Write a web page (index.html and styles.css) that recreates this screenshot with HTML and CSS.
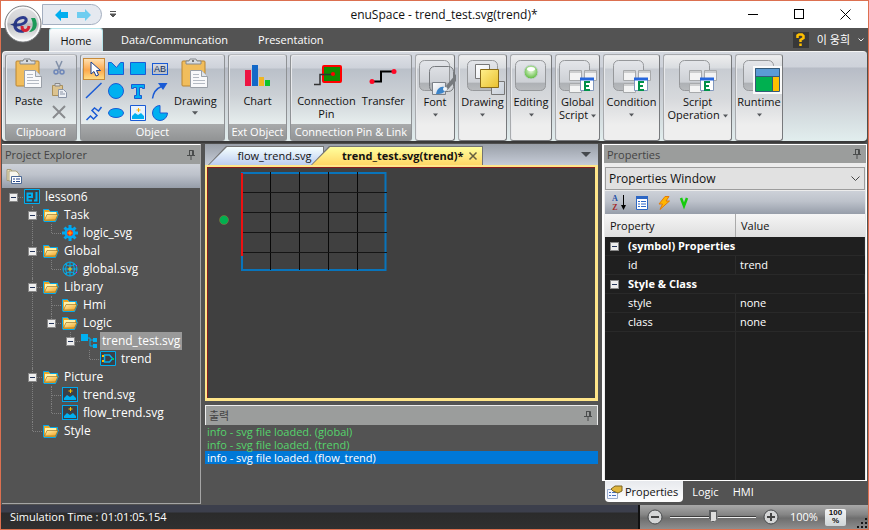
FILE: index.html
```html
<!DOCTYPE html>
<html lang="ko">
<head>
<meta charset="utf-8">
<title>enuSpace - trend_test.svg(trend)*</title>
<link rel="stylesheet" href="styles.css">
</head>
<body>
<svg class="defs" aria-hidden="true">
  <defs>
    <linearGradient id="gold" x1="0" y1="0" x2="1" y2="1"><stop offset="0" stop-color="#fff3b0"/><stop offset="1" stop-color="#f0a020"/></linearGradient>
    <linearGradient id="page" x1="0" y1="0" x2="1" y2="1"><stop offset="0" stop-color="#ffffff"/><stop offset="1" stop-color="#c9d0da"/></linearGradient>
    <linearGradient id="yellow" x1="0" y1="0" x2="1" y2="1"><stop offset="0" stop-color="#fff08c"/><stop offset="1" stop-color="#e9c02e"/></linearGradient>
    <linearGradient id="frame" x1="0" y1="0" x2="0" y2="1"><stop offset="0" stop-color="#e4e6ea"/><stop offset=".73" stop-color="#cdd0d5"/><stop offset=".74" stop-color="#adb0b4"/><stop offset="1" stop-color="#b9bbbe"/></linearGradient>
    <linearGradient id="orb" x1="0" y1="0" x2="0" y2="1"><stop offset="0" stop-color="#e2e2e4"/><stop offset=".45" stop-color="#cfd0d2"/><stop offset=".5" stop-color="#b9babd"/><stop offset="1" stop-color="#fafafa"/></linearGradient>
    <radialGradient id="lamp" cx=".5" cy=".4" r=".6"><stop offset="0" stop-color="#eefce4"/><stop offset="1" stop-color="#58b838"/></radialGradient>
  </defs>
  <symbol id="clipboard" viewBox="0 0 28 32">
    <rect x="1" y="3" width="23" height="25" rx="1" fill="#f1bd5c" stroke="#b98531"/>
    <path d="M5 6V3h3l1-2h6l1 2h4v3z" fill="#d9dde1" stroke="#85898e"/><circle cx="12" cy="3" r="1" fill="#555"/>
    <path d="M9.500 12.500h11l6 6v11h-17z" fill="#f8f9fb" stroke="#9aa0a8"/>
    <path d="M20.500 12.500v6h6" fill="#dfe4ea" stroke="#9aa0a8"/>
    <path d="M12 16.500h6M12 19.500h6M12 22.500h12M12 25.500h12" stroke="#b4bac3"/>
  </symbol>
  <symbol id="folder" viewBox="0 0 16 16">
    <path d="M.5 13V2.500h5l2 2h7v3l1-.5-3 7.500H1z" fill="#e9a92d" stroke="#00a8f0"/>
    <path d="M2 5h11v3H4l-2 4z" fill="#fff2a8"/><path d="M4 7.500h11l-2.500 5.500h-11z" fill="url(#gold)" stroke="#8d6519" stroke-width=".6"/>
  </symbol>
  <symbol id="picture" viewBox="0 0 16 16">
    <rect x=".5" y=".5" width="15" height="14" fill="#3a4048" stroke="#00a8f0"/>
    <path d="M2 13v-2l3-3 3 2 3-2 3 3v2z" fill="#00b0f0"/><path d="M8.500 2v4M6.500 4h4" stroke="#ffc000"/>
  </symbol>
  <symbol id="pin" viewBox="0 0 8 10"><path d="M2 .5h4.500M2.500 .5v5M5.500 .5v5M6.500 .5v5M0 5.500h8M4 6v4" fill="none" stroke="#4a4c4c"/></symbol>
  <symbol id="down" viewBox="0 0 7 4"><path d="M0 0h7L3.500 4z" fill="#55585c"/></symbol>
  <symbol id="script" viewBox="0 0 40 34">
    <rect x="1.500" y=".5" width="30" height="30" rx="5" fill="url(#frame)" stroke="#96989b"/>
    <g fill="#f3f3f3" stroke="#a7a9ab"><path d="M11.500 10.500h12v10h-12zM26.500 10.500h12v10h-12zM11.500 23.500h12v9h-12z"/></g>
    <path d="M11.500 12h12M26.500 12h12M11.500 25h12" stroke="#a7a9ab"/>
    <path d="M22.500 18.500h13v12h-13z" fill="#fff" stroke="#8197bc"/><path d="M22 19h14" stroke="#2867dc" stroke-width="3"/>
    <path d="M32 22h-5v8h5M27 26h4" fill="none" stroke="#00924a" stroke-width="2"/>
  </symbol>
</svg>

<div class="window">
  <header class="titlebar">
    <div class="quick">
      <button class="plain" aria-label="Undo"><svg width="14" height="12"><path d="M0 6l6-6v3h7v6H6v3z" fill="#00aeef"/></svg></button>
      <button class="plain" aria-label="Redo"><svg width="14" height="12"><path d="M14 6L8 0v3H0v6h8v3z" fill="#6dcdf0"/></svg></button>
    </div>
    <button class="plain more" aria-label="Customize"><svg width="6" height="7"><path d="M0 .5h6M0 3h6L3 6z" stroke="#555" fill="#555"/></svg></button>
    <h1>enuSpace - trend_test.svg(trend)*</h1>
    <div class="winbuttons">
      <button class="plain" aria-label="Minimize"><svg width="11" height="11"><path d="M0 5.500h10" stroke="#000"/></svg></button>
      <button class="plain" aria-label="Maximize"><svg width="11" height="11"><rect x=".5" y=".5" width="9" height="9" fill="none" stroke="#000"/></svg></button>
      <button class="plain" aria-label="Close"><svg width="11" height="11"><path d="M.5 .5l10 10M10.500 .5l-10 10" stroke="#000"/></svg></button>
    </div>
  </header>
  <button class="plain orb" aria-label="Application menu">
    <svg width="38" height="38" viewBox="0 0 38 38"><circle cx="19" cy="19" r="18" fill="url(#orb)" stroke="#77797c"/><circle cx="19" cy="19" r="16.500" fill="none" stroke="#fafafa" stroke-width="1.500"/>
      <path d="M13 20c6 0 10-3 9-6-2-3-10-1-11 5-1 6 4 8 9 7" fill="none" stroke="#2b3a8c" stroke-width="3"/>
      <path d="M6 19.500l7-2v4.500z" fill="#25367c"/><path d="M18 21c0 6 6 6 7 0" fill="none" stroke="#d22335" stroke-width="3"/><path d="M27 13h4c4 7 1 14-6 14 4-4 5-8 2-14z" fill="#1c9a58"/></svg>
  </button>

  <nav class="tabs">
    <button class="tab active">Home</button><button class="tab">Data/Communcation</button><button class="tab">Presentation</button>
    <div class="user"><button class="help" aria-label="Help"><svg width="9" height="13"><path d="M1.500 5V2.500L3 1.500h3l1.500 1.500v2L4.500 7v2M4.500 10.500V13" fill="none" stroke="#ffc000" stroke-width="2.500"/></svg></button>
      <button class="plain">이 웅희</button><svg width="6" height="4"><path d="M.5 .5L3 3 5.500 .5" fill="none" stroke="#eee"/></svg></div>
  </nav>

  <section class="ribbon" aria-label="Home">
    <div class="group"><div class="tools">
      <button class="tool"><svg width="28" height="32"><use href="#clipboard"/></svg><span>Paste</span></button>
      <div class="stack">
        <button class="plain" aria-label="Cut"><svg width="16" height="16"><path d="M5 1l4 9M11 1L7 10" stroke="#8290a8" stroke-width="1.500"/><circle cx="5" cy="12" r="2" fill="none" stroke="#6d86b8" stroke-width="1.500"/><circle cx="11" cy="12" r="2" fill="none" stroke="#6d86b8" stroke-width="1.500"/></svg></button>
        <button class="plain" aria-label="Copy"><svg width="16" height="16"><path d="M1.500 3.500h10v10h-10z" fill="#dcc38f" stroke="#a9905d"/><path d="M4 4V1.500h5V4z" fill="#ddd" stroke="#888"/><path d="M7.500 7.500h5l3 3v5h-8z" fill="#edf0f5" stroke="#8993a5"/><path d="M9 10h3M9 12h5" stroke="#8993a5"/></svg></button>
        <button class="plain" aria-label="Delete"><svg width="16" height="16"><path d="M2 2l12 12M14 2L2 14" stroke="#898b8e" stroke-width="2"/></svg></button>
      </div></div><div class="caption">Clipboard</div></div>

    <div class="group"><div class="tools objects">
      <div class="shapes">
        <button class="shape selected" aria-label="Select"><svg width="16" height="16"><path d="M5 1v12l3-2.500 2 4.500 2.500-1-2-4.500h4z" fill="#fff" stroke="#173f94"/></svg></button>
        <button class="shape" aria-label="Polygon"><svg width="16" height="16"><path d="M.5 1.500h3l5 5 4-5h3v12H.5z" fill="#00b0f0" stroke="#1a5bd5"/></svg></button>
        <button class="shape" aria-label="Rectangle"><svg width="16" height="16"><path d="M.5 1.500h15v12H.5z" fill="#00b0f0" stroke="#1a5bd5"/></svg></button>
        <button class="shape label-shape" aria-label="Text box"><span>AB</span></button>
        <button class="shape" aria-label="Line"><svg width="16" height="16"><path d="M0 15L15.500 0" stroke="#1a5bd5" stroke-width="1.500"/></svg></button>
        <button class="shape" aria-label="Circle"><svg width="16" height="16"><circle cx="8" cy="8" r="7.500" fill="#00b0f0" stroke="#1a5bd5"/></svg></button>
        <button class="shape" aria-label="Text"><svg width="16" height="16"><path d="M1.500 1.500h13v4h-2v-1h-3v8h2v3h-7v-3h2v-8h-3v1h-2z" fill="#00b0f0" stroke="#1a5bd5"/></svg></button>
        <button class="shape" aria-label="Arrow"><svg width="16" height="16"><path d="M.5 15.500c1-7 4-10 9-12" fill="none" stroke="#1a5bd5" stroke-width="1.500"/><path d="M6 0h9.500L11 7z" fill="#1a5bd5"/></svg></button>
        <button class="shape" aria-label="Polyline"><svg width="16" height="16"><path d="M.5 15l4-4 3 3 3.500-3.500-5-5L8.500 3l4 3 3-4" fill="none" stroke="#1a5bd5" stroke-width="1.500"/></svg></button>
        <button class="shape" aria-label="Ellipse"><svg width="16" height="16"><ellipse cx="8" cy="8" rx="7.500" ry="4.500" fill="#00b0f0" stroke="#1a5bd5"/></svg></button>
        <button class="shape" aria-label="Image"><svg width="16" height="16"><path d="M.5 .5h15v15H.5z" fill="#e9f3fb" stroke="#1a5bd5"/><path d="M2 14v-3l3-3 3 2 3-2 3 3v3z" fill="#00b0f0"/><path d="M8.500 3v4M6.500 5h4" stroke="#ffb000"/></svg></button>
        <button class="shape" aria-label="Pie"><svg width="16" height="16"><path d="M8 .5v7.500h7.500A7.500 7.500 0 1 1 8 .5z" fill="#00b0f0" stroke="#1a5bd5"/></svg></button>
      </div>
      <button class="tool"><svg width="28" height="32"><use href="#clipboard"/></svg><span>Drawing</span><svg width="6" height="4"><use href="#down"/></svg></button>
      </div><div class="caption">Object</div></div>

    <div class="group"><div class="tools"><button class="tool"><svg width="28" height="32"><path d="M1 12h6v16H1z" fill="#ed1442"/><path d="M8 7h6v21H8z" fill="#1368c8"/><path d="M15 19h5v9h-5z" fill="#efb623"/><path d="M21 22h5v6h-5z" fill="#0fc32c"/></svg><span>Chart</span></button></div><div class="caption">Ext Object</div></div>

    <div class="group"><div class="tools links">
      <button class="tool"><svg width="32" height="32"><rect x="13" y="8" width="18" height="16" rx="1" fill="#108b00" stroke="#ff0000" stroke-width="2"/><path d="M4 26.500h6v-10h12" fill="none" stroke="#333" stroke-width="1.500"/><circle cx="23" cy="16" r="2" fill="#f00"/></svg><span>Connection<br>Pin</span></button>
      <button class="tool"><svg width="28" height="32"><path d="M2 23.500h10v-10h12" fill="none" stroke="#000" stroke-width="2"/><circle cx="3" cy="23.500" r="2.500" fill="#ff0825"/><circle cx="25" cy="13.500" r="2.500" fill="#ff0825"/></svg><span>Transfer</span></button>
      </div><div class="caption">Connection Pin &amp; Link</div></div>

    <button class="group small"><svg width="40" height="34"><rect x="4.500" y=".5" width="30" height="30" rx="5" fill="url(#frame)" stroke="#96989b"/><rect x="14.500" y="6.500" width="24" height="25" rx="5" fill="none" stroke="#777a7e"/><path d="M17.500 22.500h13v12h-13z" fill="url(#page)" stroke="#7c8188"/><path d="M21 34c1-5 4-8 8-7l2 3c-3 4-6 4-10 4z" fill="#3b83c8"/><circle cx="30" cy="29" r="2" fill="#f3f8fc"/><path d="M31 26L41 14v7l-8 8z" fill="#777a7e"/></svg><span>Font</span><svg width="5" height="4"><use href="#down"/></svg></button>
    <button class="group small"><svg width="40" height="34"><rect x="4.500" y=".5" width="30" height="30" rx="5" fill="url(#frame)" stroke="#96989b"/><path d="M12.500 4.500h14v14h-14zM28.500 21.500h13v13h-13z" fill="url(#page)" stroke="#777"/><path d="M17.500 9.500h18v18h-18z" fill="url(#yellow)" stroke="#8a6b16"/></svg><span>Drawing</span><svg width="5" height="4"><use href="#down"/></svg></button>
    <button class="group small"><svg width="40" height="34"><rect x="4.500" y=".5" width="30" height="30" rx="5" fill="url(#frame)" stroke="#96989b"/><circle cx="20" cy="12" r="7" fill="url(#lamp)" stroke="#c9d0d6"/><ellipse cx="20" cy="9" rx="4" ry="2" fill="#fff"/></svg><span>Editing</span><svg width="5" height="4"><use href="#down"/></svg></button>
    <button class="group small"><svg width="40" height="34"><use href="#script"/></svg><span>Global<br>Script <svg width="5" height="4"><use href="#down"/></svg></span></button>
    <button class="group small"><svg width="40" height="34"><use href="#script"/></svg><span>Condition</span><svg width="5" height="4"><use href="#down"/></svg></button>
    <button class="group small"><svg width="40" height="34"><use href="#script"/></svg><span>Script<br>Operation <svg width="5" height="4"><use href="#down"/></svg></span></button>
    <button class="group small"><svg width="40" height="34"><rect x="4.500" y=".5" width="30" height="30" rx="5" fill="url(#frame)" stroke="#96989b"/><path d="M14 6h29v28H14z" fill="#fafafa"/><path d="M16 8h25v8H16z" fill="#5b9bd5"/><path d="M16 17h17v14H16z" fill="#00b050"/><path d="M34 17h7v14h-7z" fill="#ffc000"/><path d="M16.500 8.500h24v23h-24zM16.500 16.500h24M33.500 16.500v15" fill="none" stroke="#365a78"/></svg><span>Runtime</span><svg width="5" height="4"><use href="#down"/></svg></button>
  </section>

  <main class="workspace">
    <aside class="panel explorer">
      <h2 class="panel-title">Project Explorer<svg width="8" height="10"><use href="#pin"/></svg></h2>
      <div class="toolbar"><button class="plain" aria-label="View list"><svg width="16" height="16"><path d="M1 1.500h4l1 2h5v9H1z" fill="#e9dfb7" stroke="#a59b78"/><path d="M3 3h7l3 3v7H3z" fill="#f8f6ee" stroke="#aaa27e"/><path d="M5.500 8.500h10v7h-10z" fill="#fff" stroke="#4d6a97"/><path d="M7 11h2M10 11h4M7 13.500h2M10 13.500h4" stroke="#27478a"/></svg></button></div>
      <ul class="tree">
        <li><div class="row"><button class="toggle" aria-label="Collapse"></button><svg width="16" height="16"><path d="M.5 .5h15v14H.5z" fill="#3c4046" stroke="#00aeef"/><path d="M8 11.500H3.500v-7H8V8H4M12.500 3v8.500H10" fill="none" stroke="#00b0f0" stroke-width="2"/></svg><span>lesson6</span></div>
          <ul>
            <li><div class="row"><button class="toggle" aria-label="Collapse"></button><svg width="16" height="16"><use href="#folder"/></svg><span>Task</span></div>
              <ul><li><div class="row"><svg width="16" height="16"><circle cx="8" cy="8" r="5.500" fill="#00a8f0"/><path d="M8 0v16M0 8h16M2.500 2.500l11 11M13.500 2.500l-11 11" stroke="#00a8f0" stroke-width="3"/><circle cx="8" cy="8" r="3" fill="#f32b1b"/><path d="M8 5.500v5M5.500 8h5" stroke="#ffc000"/></svg><span>logic_svg</span></div></li></ul></li>
            <li><div class="row"><button class="toggle" aria-label="Collapse"></button><svg width="16" height="16"><use href="#folder"/></svg><span>Global</span></div>
              <ul><li><div class="row"><svg width="16" height="16"><circle cx="8" cy="8" r="7" fill="none" stroke="#00b0f0"/><path d="M8 1v14M1 8h14M3 3q5 4 10 0M3 13q5-4 10 0M5 2q-3 6 0 12M11 2q3 6 0 12" fill="none" stroke="#00b0f0"/><path d="M8 6v4M6 8h4" stroke="#ffc000"/><path d="M14 4h1v1h-1zM14 11h1v1h-1z" fill="#e0f"/></svg><span>global.svg</span></div></li></ul></li>
            <li><div class="row"><button class="toggle" aria-label="Collapse"></button><svg width="16" height="16"><use href="#folder"/></svg><span>Library</span></div>
              <ul><li><div class="row"><svg width="16" height="16"><use href="#folder"/></svg><span>Hmi</span></div></li>
                <li><div class="row"><button class="toggle" aria-label="Collapse"></button><svg width="16" height="16"><use href="#folder"/></svg><span>Logic</span></div>
                  <ul><li><div class="row"><button class="toggle" aria-label="Collapse"></button><svg width="16" height="16"><path d="M0 1h7v7H0zM12 5h4v4h-4zM12 11h4v4h-4z" fill="#00b0f0"/><path d="M7 5h2v8h3M9 7h3" fill="none" stroke="#00b0f0"/></svg><span class="current">trend_test.svg</span></div>
                    <ul><li><div class="row"><svg width="16" height="16"><path d="M.5 .5h15v14H.5z" fill="#3b4148" stroke="#00aeef"/><path d="M4.500 4h5l3 3.500-3 3.500h-5z" fill="none" stroke="#00b0f0" stroke-width="1.500"/><path d="M2 4h2v2H2zM2 9h2v2H2z" fill="#ffc000"/><path d="M12 7h2v2h-2z" fill="#00d060"/></svg><span>trend</span></div></li></ul></li></ul></li></ul></li>
            <li><div class="row"><button class="toggle" aria-label="Collapse"></button><svg width="16" height="16"><use href="#folder"/></svg><span>Picture</span></div>
              <ul><li><div class="row"><svg width="16" height="16"><use href="#picture"/></svg><span>trend.svg</span></div></li>
                <li><div class="row"><svg width="16" height="16"><use href="#picture"/></svg><span>flow_trend.svg</span></div></li></ul></li>
            <li><div class="row"><svg width="16" height="16"><use href="#folder"/></svg><span>Style</span></div></li>
          </ul></li>
      </ul>
    </aside>

    <div class="center">
      <section class="document">
        <div class="doctabs"><button class="doctab">flow_trend.svg</button><button class="doctab open"><span>trend_test.svg(trend)*</span><svg width="8" height="8"><path d="M.5 .5l7 7M7.500 .5l-7 7" stroke="#666040" stroke-width="1.500"/></svg></button>
          <button class="plain doclist" aria-label="Documents"><svg width="10" height="5"><path d="M0 0h10L5 5z" fill="#45494e"/></svg></button></div>
        <div class="canvas">
          <svg width="182" height="108" viewBox="1 2 182 108">
            <path d="M35 8h144.500v97H36V90" fill="none" stroke="#0874bb" stroke-width="2"/>
            <path d="M64.500 7v98M93.500 7v98M122.500 7v98M151.500 7v98" stroke="#080808"/>
            <path d="M36 27.500h145M36 47.500h145M36 67.500h145M36 87.500h145" stroke="#151515"/>
            <path d="M36 8v83" stroke="#ee1010" stroke-width="2"/><circle cx="18" cy="55" r="4.500" fill="#00b050" stroke="#a66a3b" stroke-width=".5"/>
          </svg>
        </div>
      </section>
      <section class="output">
        <h2 class="panel-title">출력<svg width="8" height="10"><use href="#pin"/></svg></h2>
        <ul class="log"><li>info - svg file loaded. (global)</li><li>info - svg file loaded. (trend)</li><li class="current">info - svg file loaded. (flow_trend)</li></ul>
      </section>
    </div>

    <aside class="side">
      <section class="properties">
        <h2 class="panel-title">Properties<svg width="8" height="10"><use href="#pin"/></svg></h2>
        <div class="inner">
          <div class="combo"><select aria-label="Properties target"><option>Properties Window</option></select><svg width="9" height="5"><path d="M.5 .5l4 4 4-4" fill="none" stroke="#444"/></svg></div>
          <div class="toolbar">
            <button class="plain sort" aria-label="Sort alphabetically"><span class="az"><b>A</b><i>Z</i></span><svg width="5" height="15"><path d="M2.500 0v12" stroke="#000"/><path d="M0 10h5l-2.500 5z"/></svg></button>
            <button class="plain" aria-label="Categories"><svg width="12" height="14"><path d="M.5 .5h11v13H.5z" fill="#fff" stroke="#2e67c4"/><path d="M0 1.500h12" stroke="#2e67c4" stroke-width="3"/><path d="M2 5.500h2M5 5.500h5M2 8h2M5 8h5M2 10.500h2M5 10.500h5" stroke="#3169c9"/></svg></button>
            <button class="plain" aria-label="Events"><svg width="12" height="14"><path d="M7 .5h4L8 5h3.500L2 13.500 4.500 8H1z" fill="#ffb600" stroke="#e27a0b"/></svg></button>
            <button class="plain" aria-label="Variables"><svg width="8" height="10"><path d="M1 0l3 8 3-8" fill="none" stroke="#15cb0d" stroke-width="2.500"/></svg></button>
          </div>
          <table>
            <thead><tr><th>Property</th><th>Value</th></tr></thead>
            <tbody>
              <tr class="category"><td colspan="2"><button class="toggle" aria-label="Collapse"></button>(symbol) Properties</td></tr>
              <tr><td>id</td><td>trend</td></tr>
              <tr class="category"><td colspan="2"><button class="toggle" aria-label="Collapse"></button>Style &amp; Class</td></tr>
              <tr><td>style</td><td>none</td></tr>
              <tr><td>class</td><td>none</td></tr>
              <tr class="rest"><td></td><td></td></tr>
            </tbody>
          </table>
        </div>
      </section>
      <div class="sidetabs">
        <button class="active"><svg width="16" height="14"><path d="M.5 4.500h10v9H.5z" fill="#f4f7ff" stroke="#9aaccd"/><path d="M2 7.500h2M5 7.500h4M2 10.500h2M5 10.500h4" stroke="#4771bd"/><path d="M4 4l4-3h7v5l-4 2-5-2z" fill="#dfb53c" stroke="#7c6522"/></svg>Properties</button>
        <button>Logic</button><button>HMI</button>
      </div>
    </aside>
  </main>

  <footer class="status">
    <span>Simulation Time : 01:01:05.154</span>
    <div class="zoom">
      <button class="plain" aria-label="Zoom out"><svg width="16" height="16"><circle cx="8" cy="8" r="7" fill="#d4d5d6" stroke="#47494b"/><path d="M4 8h8" stroke="#444" stroke-width="2"/></svg></button>
      <input type="range" aria-label="Zoom" min="0" max="200" value="100">
      <button class="plain" aria-label="Zoom in"><svg width="16" height="16"><circle cx="8" cy="8" r="7" fill="#d4d5d6" stroke="#47494b"/><path d="M4 8h8M8 4v8" stroke="#444" stroke-width="2"/></svg></button>
      <span>100%</span>
      <button class="reset">100<br>%</button>
      <svg class="grip" width="11" height="11"><path d="M8 0h2v2H8zM4 4h2v2H4zM8 4h2v2H8zM0 8h2v2H0zM4 8h2v2H4zM8 8h2v2H8z" fill="#161616"/></svg>
    </div>
  </footer>
</div>
</body>
</html>
```

FILE: styles.css
```css
* { box-sizing: border-box; }

body {
  margin: 0;
  color: #111;
  background: #535353;
  font: 11px/13px "Open Sans", "Noto Sans CJK KR", sans-serif;
}

button, select { font: inherit; color: inherit; margin: 0; }
button { white-space: nowrap; }
svg { flex: none; display: block; overflow: visible; }
ul { margin: 0; padding: 0; list-style: none; }
.defs { position: absolute; width: 0; height: 0; }
.plain { display: flex; align-items: center; justify-content: center; padding: 0; border: 0; background: none; }

.window {
  position: relative;
  display: flex;
  flex-direction: column;
  min-height: 100vh;
  border: 1px solid #dc7050;
}

/* title bar */
.titlebar { display: flex; align-items: center; height: 27px; background: #fff; }
.quick {
  display: flex;
  align-items: center;
  gap: 8px;
  width: 60px;
  height: 21px;
  margin-left: 41px;
  padding-left: 12px;
  border: 1px solid #a4afc0;
  border-radius: 0 11px 11px 0;
  background: #e5e9f0;
}
.more { width: 22px; }
.titlebar h1 { flex: 1; margin: 0; padding-left: 34px; text-align: center; font-size: 12px; font-weight: 400; }
.winbuttons { display: flex; }
.winbuttons button { width: 46px; height: 27px; }
.orb { position: absolute; left: 3px; top: 4px; z-index: 2; }

/* ribbon tabs */
.tabs { display: flex; align-items: flex-end; height: 23px; padding-left: 48px; background: #535353; color: #fff; }
.tab { height: 23px; padding: 0 15px; border: 0; background: none; }
.tab.active {
  width: 54px;
  margin-right: 3px;
  padding: 0;
  border-radius: 3px 3px 0 0;
  border: 1px solid #b7e4ea;
  border-bottom: 0;
  background: linear-gradient(#fbfcfd, #d6d9df);
  color: #111;
}
.user { display: flex; align-items: center; gap: 8px; height: 23px; margin-left: auto; padding-right: 4px; }
.help { display: flex; align-items: center; justify-content: center; width: 16px; height: 16px; padding: 0; border: 0; background: #383838; }

/* ribbon */
.ribbon {
  display: grid;
  grid-template-columns: 72px 145px 59px 122px 40px 49px 42px 45px 57px 69px 48px;
  gap: 3px;
  height: 90px;
  margin: 0 1px 3px;
  padding: 2px;
  border: solid #f5f5f5;
  border-width: 1px 0 0 1px;
  border-radius: 4px;
  box-shadow: 0 2px 1px #393939;
  background: linear-gradient(#d5d9e0 0, #ced2da 15px, #b7bcc6 16px, #c8ccd2 42px, #e2eeee 100%);
}
.group {
  display: flex;
  flex-direction: column;
  min-width: 0;
  border: 1px solid #8f9295;
  border-top-color: #b7b9bd;
  border-radius: 3px;
  box-shadow: inset 1px 1px #e8e9ec;
  background: linear-gradient(#dcdfe5 0, #ced2da 13px, #bac0c9 14px, #cbd0d5 40px, #e6eded 68px);
}
.tools { flex: 1; display: flex; justify-content: space-evenly; padding-top: 3px; }
.objects { justify-content: flex-start; gap: 3px; padding-left: 2px; }
.caption { height: 16px; line-height: 15px; background: linear-gradient(#a8aaab, #929495); color: #fff; text-align: center; white-space: nowrap; }
.tool { display: flex; flex-direction: column; align-items: center; gap: 4px; padding: 0; border: 0; background: none; }
.stack { display: grid; align-content: start; gap: 6px; padding-top: 2px; }
.shapes { display: grid; grid-template-columns: repeat(4, 22px); grid-auto-rows: 22px; align-content: start; }
.shape { display: flex; align-items: center; justify-content: center; padding: 0; border: 1px solid transparent; background: none; }
.shape.selected { border-color: #c88b3a; background: linear-gradient(#ffe0b0, #fca84d 55%, #ffdc83); }
.label-shape span { width: 16px; border: 1px solid #1a5bd5; color: #14305e; font: 9px/10px "Liberation Sans", sans-serif; }
.small {
  align-items: center;
  gap: 1px;
  padding: 5px 0 0;
  border-color: #a8aaad #77797c #77797c #a8aaad;
  background: linear-gradient(#efefef 0, #d9dce0 13px, #c8ccd2 14px, #d7d9dc 44px, #eeeeee 70px);
}
.small span svg { display: inline-block; vertical-align: middle; }
.small > svg + span + svg { margin-top: 4px; }

/* workspace */
.workspace { flex: 1; display: grid; grid-template-columns: 199px 1fr 265px; gap: 4px; padding: 0 1px 1px; }
.panel-title {
  display: flex;
  align-items: center;
  justify-content: space-between;
  height: 19px;
  margin: 0;
  padding: 0 5px 0 3px;
  background: #9b9d9c;
  color: #444;
  font-size: 11px;
  font-weight: 400;
}
.toolbar { display: flex; align-items: center; height: 24px; background: linear-gradient(#cdd1d8, #bdc2cb 45%, #969da9); }
.explorer { border: 1px solid #a5a5a5; border-top-color: #fff; border-left: 0; background: #535353; color: #fff; }
.explorer .toolbar { padding-left: 4px; }

/* tree */
.tree { font-size: 12px; }
.tree ul { margin-left: 19px; }
.tree li { position: relative; }
.tree ul > li::before { content: ""; position: absolute; left: 11px; top: 0; bottom: 0; border-left: 1px dotted #808080; }
.tree ul > li:last-child::before { bottom: auto; height: 9px; }
.row { position: relative; display: flex; align-items: center; height: 18px; padding-left: 22px; }
.row::before { content: ""; position: absolute; left: 12px; top: 9px; width: 9px; border-top: 1px dotted #808080; }
.row > span { margin-left: 3px; padding: 0 2px; line-height: 18px; }
.row .current { background: #999; }
.toggle { width: 9px; height: 9px; padding: 0; border: 1px solid #888; background: linear-gradient(#26365a, #26365a) center / 5px 1px no-repeat, #eee; }
.row .toggle { position: relative; margin: 0 6px 0 -15px; }

/* documents and output */
.center { display: flex; flex-direction: column; gap: 4px; min-width: 0; }
.document { flex: 1; display: flex; flex-direction: column; }
.doctabs { display: flex; align-items: flex-end; height: 21px; padding-left: 3px; background: linear-gradient(#999fa8, #c6ccd7); }
.doctab {
  position: relative;
  z-index: 0;
  width: 116px;
  height: 19px;
  padding: 0 0 0 17px;
  border: 0;
  background: #737373;
  clip-path: polygon(18px 0, 100% 0, 100% 100%, 0 100%);
}
.doctab::before {
  content: "";
  position: absolute;
  z-index: -1;
  inset: 1px 1px 0;
  background: linear-gradient(#f5ffff, #bdcdf0);
  clip-path: polygon(18px 0, 100% 0, 100% 100%, 0 100%);
}
.doctab.open { display: flex; align-items: center; justify-content: space-between; width: 172px; margin-left: -13px; padding: 0 6px 0 31px; font-weight: 700; }
.doctab.open::before { background: linear-gradient(#ffff9d, #ffd666); }
.doclist { align-self: center; margin-left: auto; padding-right: 7px; }
.canvas { flex: 1; border: 2px solid #ffe68a; border-width: 2px 3px 3px 2px; box-shadow: inset 1px 1px #8c1c1c; background: #404040; }
.output { height: 99px; background: #535353; }
.output .panel-title { height: 20px; border: 1px solid #eee; border-width: 1px 1px 0; }
.log { color: #55d46c; }
.log li { padding-left: 2px; }
.log .current { background: #0078d7; color: #fff; }

/* properties */
.side { display: flex; flex-direction: column; min-width: 0; }
.properties { flex: 1; display: flex; flex-direction: column; border: 1px solid #fff; border-width: 1px 1px 1px 2px; }
.properties .panel-title { height: 18px; }
.inner { flex: 1; display: flex; flex-direction: column; padding: 4px 0 0 1px; border-right: 1px solid #e8e8e8; background: #ececec; }
.combo { position: relative; margin-bottom: 1px; }
.combo select { display: block; width: 100%; height: 23px; padding: 0 3px; border: 1px solid #9c9c9c; border-radius: 0; background: #e1e1e1; appearance: none; font-size: 12px; }
.combo svg { position: absolute; right: 5px; top: 9px; pointer-events: none; }
.properties .toolbar { flex: none; height: 23px; gap: 10px; padding-left: 7px; }
.sort { gap: 3px; }
.az { display: grid; font: 8px/9px "Liberation Serif", serif; }
.az b { color: #244fa7; }
.az i { color: #a42929; font-style: normal; font-weight: 700; }
table { flex: 1; display: grid; grid-template-rows: auto 1fr; color: #fff; background: #1f1f1f; }
thead, tbody { display: grid; grid-template-columns: 131px 1fr; }
tbody { grid-template-rows: repeat(5, 19px) 1fr; }
tr { display: grid; grid-template-columns: subgrid; grid-column: 1 / -1; }
th { height: 23px; padding: 0 5px; border-right: 1px solid #aaa; background: linear-gradient(#f5f5f5, #dedede); color: #111; font-size: 11px; font-weight: 400; line-height: 23px; text-align: left; }
th + th { border-right: 0; }
td { padding: 0 4px; border-bottom: 1px solid #292929; line-height: 18px; }
td:first-child { padding-left: 23px; border-right: 1px solid #2b2b2b; }
.category td { display: flex; align-items: center; grid-column: 1 / -1; gap: 9px; font-weight: 700; }
.category td:first-child { padding-left: 5px; }
.rest td { border-bottom: 0; }
.sidetabs { display: flex; height: 23px; padding: 0 0 2px 3px; color: #fff; }
.sidetabs button { padding: 0 7px; border: 0; background: none; }
.sidetabs .active { display: flex; align-items: center; gap: 2px; margin-right: 2px; padding: 0 5px 0 2px; border-radius: 0 0 4px 4px; background: linear-gradient(#e7e9ed, #fff); color: #111; }

/* status bar */
.status { display: flex; align-items: stretch; justify-content: space-between; height: 24px; background: linear-gradient(#3c3f4c 0, #3c3f4c 7px, #2b2b2b 8px, #303030 100%); color: #fff; line-height: 24px; }
.status > span { padding-left: 9px; }
.zoom { display: flex; align-items: center; width: 230px; padding-left: 7px; gap: 7px; border-left: 2px solid #111; background: linear-gradient(#a8a8a8, #858585 40%, #6e6e6e 55%, #8e8e8e); }
.zoom input { width: 86px; height: 16px; margin: 0; background: none; appearance: none; }
.zoom input::-webkit-slider-runnable-track { height: 2px; border-top: 1px solid #3d3d3d; background: #eee; }
.zoom input::-webkit-slider-thumb { appearance: none; width: 9px; height: 13px; margin-top: -7px; border: 2px solid #5b5d5f; background: #ddd; clip-path: polygon(0 0, 100% 0, 100% 65%, 50% 100%, 0 65%); }
.zoom > span { margin-left: 4px; }
.reset { width: 21px; height: 17px; padding: 0; border: 0; border-radius: 2px; background: linear-gradient(#f3f3f3, #cfd6d8); color: #111; font: 700 8px/8px "Liberation Sans", sans-serif; }
.grip { align-self: flex-end; margin-left: auto; }
```
